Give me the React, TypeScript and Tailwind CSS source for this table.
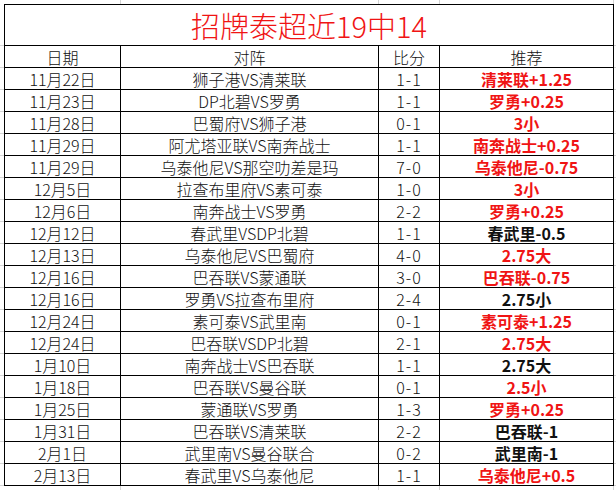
const rows: [string, string, string, string, boolean][] = [
  ["11月22日", "狮子港VS清莱联", "1-1", "清莱联+1.25", true],
  ["11月23日", "DP北碧VS罗勇", "1-1", "罗勇+0.25", true],
  ["11月28日", "巴蜀府VS狮子港", "0-1", "3小", true],
  ["11月29日", "阿尤塔亚联VS南奔战士", "1-1", "南奔战士+0.25", true],
  ["11月29日", "乌泰他尼VS那空叻差是玛", "7-0", "乌泰他尼-0.75", true],
  ["12月5日", "拉查布里府VS素可泰", "1-0", "3小", true],
  ["12月6日", "南奔战士VS罗勇", "2-2", "罗勇+0.25", true],
  ["12月12日", "春武里VSDP北碧", "1-1", "春武里-0.5", false],
  ["12月13日", "乌泰他尼VS巴蜀府", "4-0", "2.75大", true],
  ["12月16日", "巴吞联VS蒙通联", "3-0", "巴吞联-0.75", true],
  ["12月16日", "罗勇VS拉查布里府", "2-4", "2.75小", false],
  ["12月24日", "素可泰VS武里南", "0-1", "素可泰+1.25", true],
  ["12月24日", "巴吞联VSDP北碧", "2-1", "2.75大", true],
  ["1月10日", "南奔战士VS巴吞联", "1-1", "2.75大", false],
  ["1月18日", "巴吞联VS曼谷联", "0-1", "2.5小", true],
  ["1月25日", "蒙通联VS罗勇", "1-3", "罗勇+0.25", true],
  ["1月31日", "巴吞联VS清莱联", "2-2", "巴吞联-1", false],
  ["2月1日", "武里南VS曼谷联合", "0-2", "武里南-1", false],
  ["2月13日", "春武里VS乌泰他尼", "1-1", "乌泰他尼+0.5", true],
];

const font = { fontFamily: '"Noto Sans CJK SC", "Noto Sans", sans-serif' };

// faint spreadsheet gridlines around the bordered table
const GridStrip = () => (
  <div className="flex h-[4px]">
    <div className="w-[121px] shrink-0 border-r border-[#d4d4d4]" />
    <div className="w-[258px] shrink-0 border-r border-[#d4d4d4]" />
    <div className="w-[61px] shrink-0 border-r border-[#d4d4d4]" />
    <div className="w-[174px] shrink-0 border-r border-[#d4d4d4]" />
  </div>
);

const Row = ({ children, h, top }: { children: React.ReactNode; h: string; top?: boolean }) => (
  <div className="flex">
    <div className="w-[4px] shrink-0 border-b border-[#d4d4d4]" />
    <div
      className={
        top
          ? `w-[610px] shrink-0 flex border border-black ${h}`
          : `w-[610px] shrink-0 flex border-l border-r border-b border-black ${h}`
      }
    >
      {children}
    </div>
    <div className="w-[2px] shrink-0 border-b border-[#d4d4d4]" />
  </div>
);

export default function App() {
  return (
    <div className="w-[616px] h-[490px] bg-white overflow-hidden text-[#111]" style={font}>
      <GridStrip />
      <Row h="h-[42px]" top>
        <div className="flex-1 flex items-center justify-center text-[29px] font-light text-[#f01414] leading-none">
          招牌泰超近19中14
        </div>
      </Row>
      <Row h="h-[22px]">
        <div className="w-[116px] border-r border-black flex items-center justify-center text-[16px] font-light leading-none">日期</div>
        <div className="w-[258px] border-r border-black flex items-center justify-center text-[16px] font-light leading-none">对阵</div>
        <div className="w-[61px] border-r border-black flex items-center justify-center text-[16px] font-light leading-none">比分</div>
        <div className="w-[173px] flex items-center justify-center text-[16px] font-light leading-none">推荐</div>
      </Row>
      {rows.map(([date, match, score, tip, red], i) => (
        <Row key={i} h="h-[22px]">
          <div className="w-[116px] border-r border-black flex items-center justify-center text-[16px] font-light leading-none">{date}</div>
          <div className="w-[258px] border-r border-black flex items-center justify-center text-[16px] font-light leading-none">{match}</div>
          <div className="w-[61px] border-r border-black flex items-center justify-center text-[16px] font-light leading-none tracking-[1px]">{score}</div>
          <div
            className={
              red
                ? "w-[173px] flex items-center justify-center text-[16px] leading-none font-bold text-[#f01414]"
                : "w-[173px] flex items-center justify-center text-[16px] leading-none font-bold"
            }
          >
            {tip}
          </div>
        </Row>
      ))}
      <GridStrip />
    </div>
  );
}
